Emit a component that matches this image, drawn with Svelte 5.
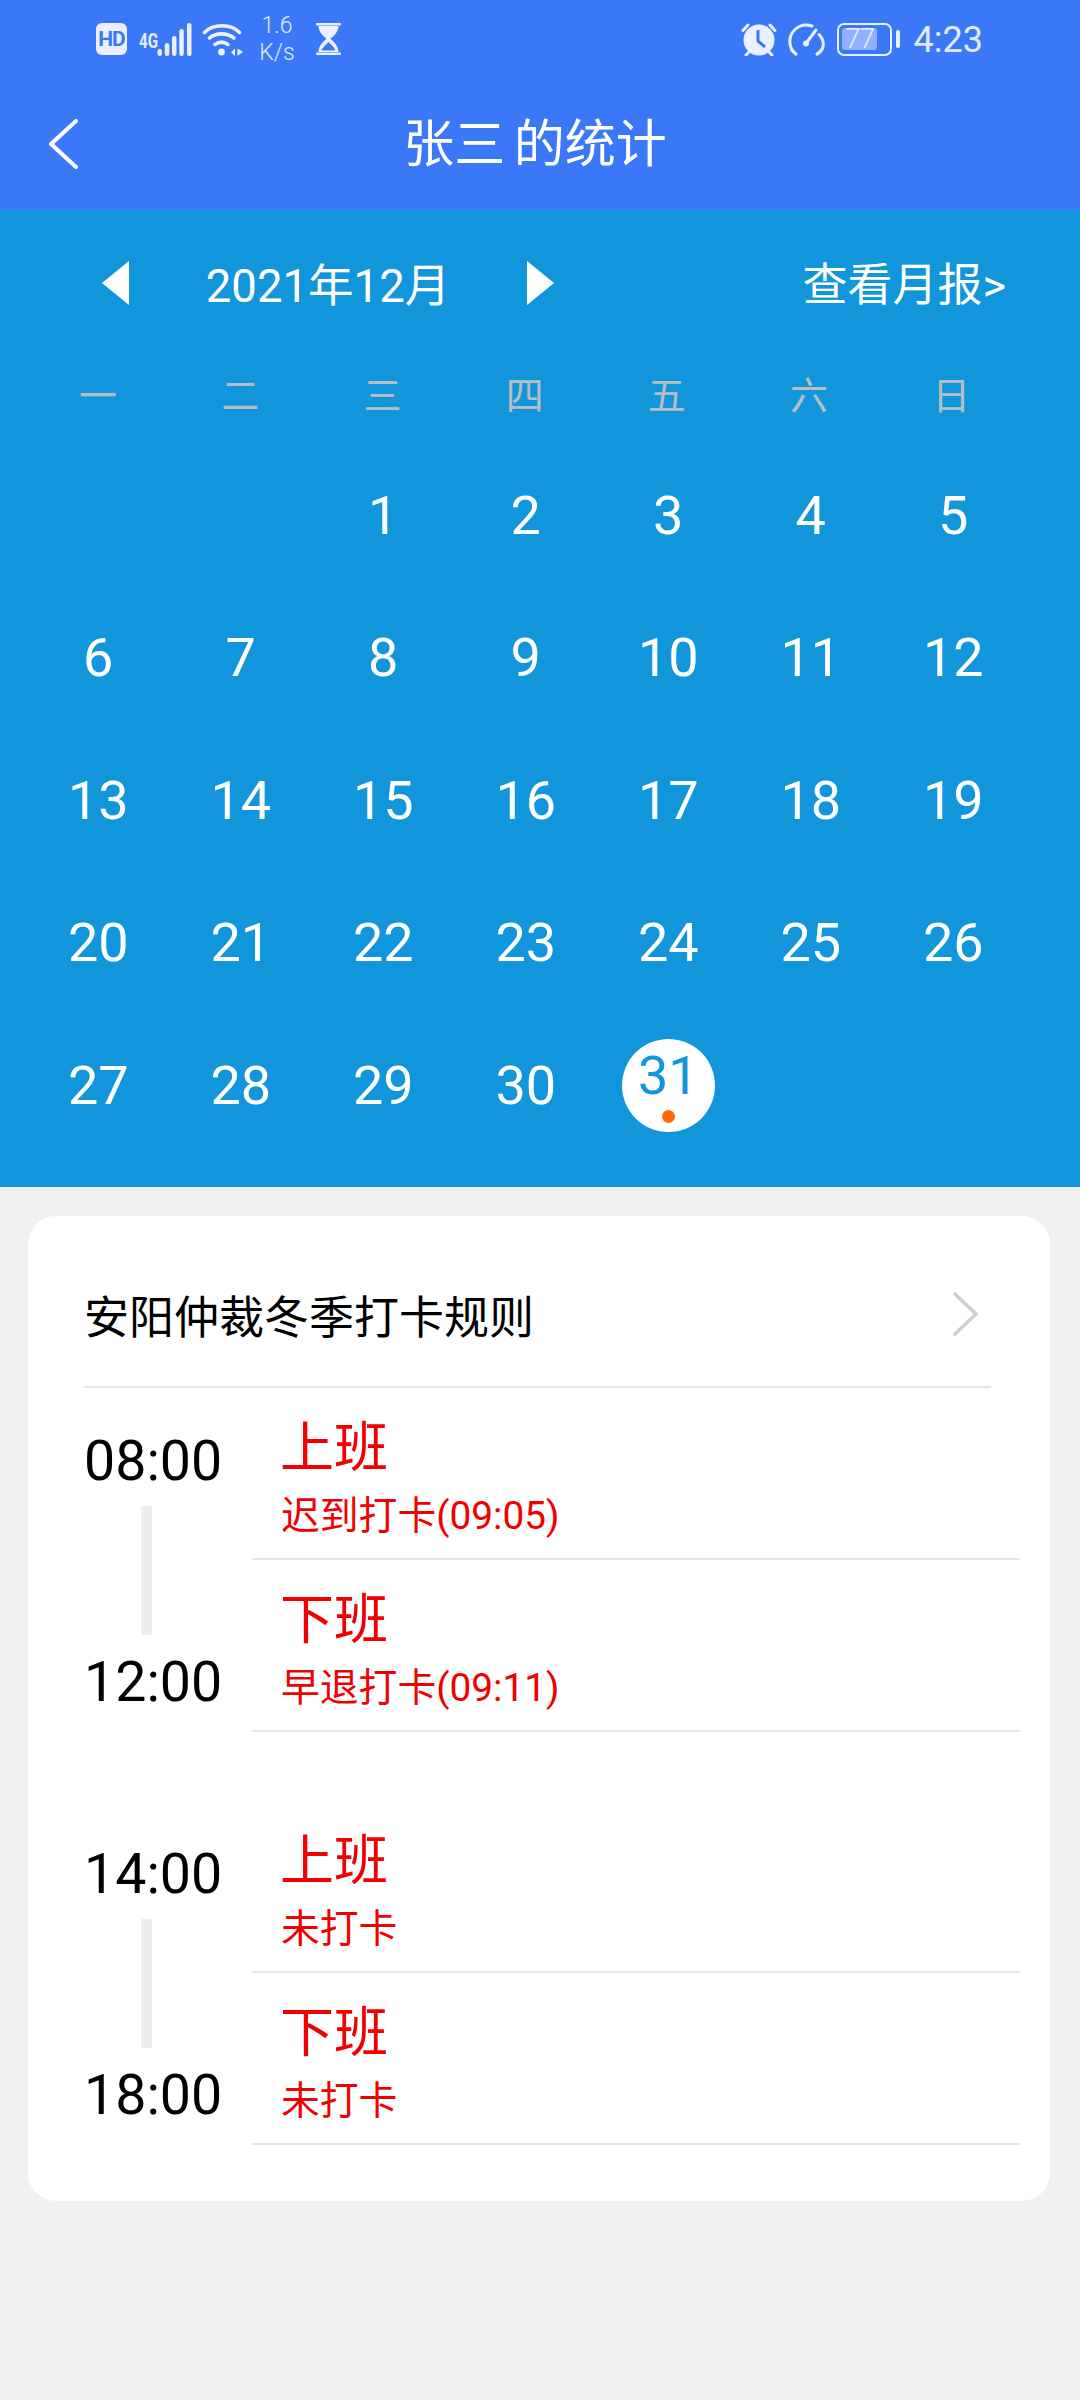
<script>
  const weekdays = ['一', '二', '三', '四', '五', '六', '日'];
  const blanks = [1, 2];
  const days = Array.from({ length: 31 }, (_, i) => i + 1);
  const groups = [
    {
      start: '08:00',
      end: '12:00',
      rows: [
        { title: '上班', note: '迟到打卡(09:05)' },
        { title: '下班', note: '早退打卡(09:11)' }
      ]
    },
    {
      start: '14:00',
      end: '18:00',
      rows: [
        { title: '上班', note: '未打卡' },
        { title: '下班', note: '未打卡' }
      ]
    }
  ];
</script>

<div class="page">
  <header class="top">
    <div class="status">
      <div class="status-left">
        <span class="hd">HD</span>
        <span class="net">4G</span>
        <svg class="bars" viewBox="0 0 35 33" width="35" height="33" fill="#eaf0ff">
          <rect x="0.5" y="26" width="4.5" height="7" rx="2.2" />
          <rect x="7.8" y="20" width="4.5" height="13" rx="2.2" />
          <rect x="15" y="13" width="4.5" height="20" rx="2.2" />
          <rect x="22.3" y="6" width="4.5" height="27" rx="2.2" />
          <rect x="30" y="0" width="4.5" height="33" rx="2.2" />
        </svg>
        <svg class="wifi" viewBox="0 0 41 33" width="41" height="33" fill="none" stroke="#eaf0ff" stroke-width="3.6" stroke-linecap="round">
          <path d="M2.5 9.5C11 .5 29 .5 37.5 9.5" />
          <path d="M7.5 15C14 9.5 25 9.5 32 15" />
          <path d="M13 21.5C17 18.5 22 18.5 26 21.5" />
          <circle cx="19.5" cy="29" r="3.4" fill="#eaf0ff" stroke="none" />
          <path d="M33 25.5V33L29 29.5ZM35.5 25.5V33L41 29Z" fill="#eaf0ff" stroke="none" />
        </svg>
        <span class="speed"><span>1.6</span><span>K/s</span></span>
        <svg class="glass" viewBox="0 0 25 32" width="25" height="32" fill="#eaf0ff">
          <rect x="0" y="0" width="25" height="2.4" rx="1" />
          <rect x="0" y="29.6" width="25" height="2.4" rx="1" />
          <path d="M2.5 3H22.5C22.5 9 18 12.5 14.5 15.8 18 19 22.5 23 22.5 29H2.5C2.5 23 7 19 10.5 15.8 7 12.5 2.5 9 2.5 3ZM12.5 19C9.5 22 6.5 24.5 5.6 27.5H19.4C18.5 24.5 15.5 22 12.5 19Z" fill-rule="evenodd" />
        </svg>
      </div>
      <div class="status-right">
        <svg class="alarm" viewBox="0 0 36 34" width="36" height="34">
          <circle cx="18" cy="18" r="15.5" fill="#eaf0ff" />
          <path d="M17 8V19L24 25" fill="none" stroke="#3b78f7" stroke-width="3" />
          <path d="M2 8.5 7 3M34 8.5 29 3M5 33l3-3M31 33l-3-3" fill="none" stroke="#eaf0ff" stroke-width="3" stroke-linecap="round" />
        </svg>
        <svg class="gauge" viewBox="0 0 37 33" width="37" height="33" fill="none" stroke="#eaf0ff" stroke-width="3" stroke-linecap="round">
          <path d="M7.5 31C0 24 0 13 7 6.5 12 2 18 1 24 3" />
          <path d="M31 11.5C37 18 37 26 29.5 31" />
          <path d="M3.5 27 8 31M33.5 27 29 31" />
          <path d="M19 19 28 7" />
          <circle cx="18" cy="20.5" r="3" fill="#eaf0ff" stroke="none" />
        </svg>
        <div class="battery">
          <span class="level">77</span>
        </div>
        <span class="cap"></span>
        <span class="time">4:23</span>
      </div>
    </div>
    <nav class="nav">
      <svg class="back" viewBox="0 0 29 50" width="29" height="50" fill="none" stroke="#fff" stroke-width="4" stroke-linecap="round" stroke-linejoin="round">
        <path d="M27 2 2 25 27 48" />
      </svg>
      <h1>张三 的统计</h1>
    </nav>
  </header>

  <section class="calendar">
    <div class="month-row">
      <span class="tri left"></span>
      <span class="month">2021年12月</span>
      <span class="tri right"></span>
      <span class="report">查看月报&gt;</span>
    </div>
    <div class="grid weekdays">
      {#each weekdays as w}
        <span>{w}</span>
      {/each}
    </div>
    <div class="grid days">
      {#each blanks as b (b)}
        <span class="cell"></span>
      {/each}
      {#each days as d (d)}
        <span class="cell">
          {#if d === 31}
            <span class="today">{d}<i class="dot"></i></span>
          {:else}
            {d}
          {/if}
        </span>
      {/each}
    </div>
  </section>

  <section class="card">
    <div class="rule">
      <span>安阳仲裁冬季打卡规则</span>
      <svg viewBox="0 0 25 44" width="25" height="44" fill="none" stroke="#cfcfcf" stroke-width="3.6" stroke-linecap="round" stroke-linejoin="round">
        <path d="M2 2 23 22 2 42" />
      </svg>
    </div>
    {#each groups as g}
      <div class="group">
        <div class="times">
          <span class="clock">{g.start}</span>
          <span class="bar"></span>
          <span class="clock">{g.end}</span>
        </div>
        <div class="rows">
          {#each g.rows as r}
            <div class="row">
              <span class="title">{r.title}</span>
              <span class="note">{r.note}</span>
            </div>
          {/each}
        </div>
      </div>
    {/each}
  </section>
</div>

<style>
  :global(body) {
    margin: 0;
    background: #f0f0f0;
  }
  .page {
    width: 1080px;
    height: 2400px;
    background: #f0f0f0;
    font-family: Roboto, "Noto Sans CJK SC", sans-serif;
    overflow: hidden;
  }
  .top {
    height: 210px;
    background: #3b78f7;
  }
  .status {
    height: 78px;
    display: flex;
    justify-content: space-between;
    align-items: center;
    color: #e4ebff;
  }
  .status-left,
  .status-right {
    display: flex;
    align-items: center;
  }
  .status-left {
    padding-left: 96px;
  }
  .status-right {
    padding-right: 97px;
  }
  .hd {
    width: 31px;
    height: 32px;
    background: #eaf0ff;
    border-radius: 6px;
    color: #3b78f7;
    font: 700 21px/32px Roboto, sans-serif;
    text-align: center;
    letter-spacing: -1px;
  }
  .net {
    width: 18px;
    margin-left: 12px;
    align-self: flex-start;
    margin-top: 19px;
    font: 700 21px/20px Roboto, sans-serif;
    transform: scaleX(0.72);
    transform-origin: left;
    white-space: nowrap;
  }
  .wifi {
    margin-left: 10px;
  }
  .speed {
    width: 38px;
    margin-left: 15px;
    display: flex;
    flex-direction: column;
    align-items: center;
    font-size: 23px;
    line-height: 27px;
    font-weight: 300;
    white-space: nowrap;
  }
  .glass {
    margin-left: 20px;
  }
  .alarm {
    margin-right: 11px;
  }
  .gauge {
    margin-right: 12px;
  }
  .battery {
    position: relative;
    box-sizing: border-box;
    width: 55px;
    height: 33px;
    border: 2.5px solid #eaf0ff;
    border-radius: 7px;
  }
  .level {
    position: absolute;
    left: 3.5px;
    top: 3.5px;
    bottom: 3.5px;
    width: 35px;
    border-radius: 3px;
    background: #8fb0fb;
    font-size: 28px;
    font-weight: 300;
    line-height: 21px;
    text-align: center;
    letter-spacing: -1px;
    color: #eaf0ff;
  }
  .cap {
    width: 4px;
    height: 18px;
    border-radius: 2px;
    background: #eaf0ff;
    margin: 0 14px 0 4px;
  }
  .time {
    font-size: 36px;
    line-height: 40px;
    margin-top: 2px;
  }
  .nav {
    position: relative;
    height: 132px;
    display: flex;
    align-items: center;
    justify-content: center;
    padding: 2px 10px 0 0;
    box-sizing: border-box;
  }
  .back {
    position: absolute;
    left: 49px;
    top: 41px;
  }
  h1 {
    margin: 0;
    color: #fff;
    font-size: 51px;
    font-weight: 400;
    line-height: 70px;
    word-spacing: -4px;
  }
  .calendar {
    height: 977px;
    box-sizing: border-box;
    background: #1296db;
    color: #fff;
  }
  .month-row {
    height: 146px;
    display: flex;
    align-items: center;
    padding: 0 74px 0 102px;
  }
  .tri {
    width: 0;
    height: 0;
    border-top: 22px solid transparent;
    border-bottom: 22px solid transparent;
  }
  .tri.left {
    border-right: 27px solid #fff;
  }
  .tri.right {
    border-left: 27px solid #fff;
  }
  .month {
    width: 398px;
    padding: 0 0 3px 0;
    box-sizing: border-box;
    text-align: center;
    font-size: 45.5px;
  }
  .report {
    margin-left: auto;
    padding-bottom: 4px;
    font-size: 45px;
  }
  .grid {
    display: grid;
    padding-left: 27px;
  }
  .weekdays {
    grid-template-columns: repeat(7, 142.2px);
    height: 72px;
    margin-bottom: 16px;
    align-items: center;
    justify-items: center;
    color: #b9bdc2;
    font-size: 38px;
  }
  .days {
    grid-template-columns: repeat(7, 142.5px);
    grid-auto-rows: 142.5px;
  }
  .cell {
    display: flex;
    align-items: center;
    justify-content: center;
    font-size: 54px;
  }
  .today {
    position: relative;
    width: 93px;
    height: 93px;
    box-sizing: border-box;
    padding-bottom: 20px;
    border-radius: 50%;
    background: #fff;
    color: #1296db;
    display: flex;
    align-items: center;
    justify-content: center;
  }
  .dot {
    position: absolute;
    left: 40px;
    top: 71px;
    width: 13px;
    height: 13px;
    border-radius: 50%;
    background: #ff6a00;
  }
  .card {
    margin: 29px 30px 0 28px;
    height: 985px;
    background: #fff;
    border-radius: 28px;
  }
  .rule {
    margin: 0 59px 0 56px;
    padding: 26px 13px 0 0;
    height: 144px;
    display: flex;
    align-items: center;
    justify-content: space-between;
    border-bottom: 2px solid #e4e4e6;
    font-size: 45px;
    color: #000;
  }
  .group {
    display: flex;
    margin-left: 56px;
    margin-bottom: 69px;
  }
  .times {
    width: 168px;
    padding-top: 39px;
    display: flex;
    flex-direction: column;
  }
  .clock {
    font-size: 55.5px;
    line-height: 70px;
    color: #000;
  }
  .bar {
    width: 11px;
    height: 129px;
    margin: 9px 0 13px 57px;
    background: #eeeeee;
  }
  .rows {
    flex: 1;
    margin-right: 30px;
  }
  .row {
    height: 172px;
    box-sizing: border-box;
    padding: 26px 0 0 28px;
    border-bottom: 2px solid #e4e4e4;
    display: flex;
    flex-direction: column;
    color: #f00000;
  }
  .title {
    font-size: 54px;
    line-height: 70px;
  }
  .note {
    font-size: 38.8px;
    line-height: 56px;
    margin: 4px 0 0 1px;
  }
</style>
